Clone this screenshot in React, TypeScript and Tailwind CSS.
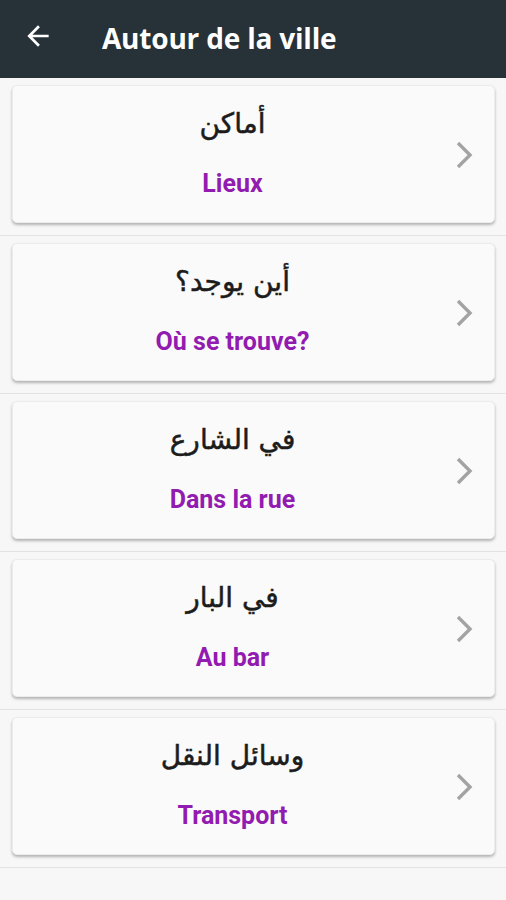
const items = [
  { ar: "أماكن", fr: "Lieux" },
  { ar: "أين يوجد؟", fr: "Où se trouve?" },
  { ar: "في الشارع", fr: "Dans la rue" },
  { ar: "في البار", fr: "Au bar" },
  { ar: "وسائل النقل", fr: "Transport" },
]

export default function App() {
  return (
    <div className="w-[506px] h-[900px] bg-[#f7f7f7] overflow-hidden">
      {/* Toolbar */}
      <div className="h-[78px] bg-[#263238] flex items-center">
        <svg width="32" height="32" viewBox="0 0 24 24" className="ml-[22px] mb-[7px]">
          <path d="M20 11H7.83l5.59-5.59L12 4l-8 8 8 8 1.41-1.41L7.83 13H20v-2z" fill="#fff" />
        </svg>
        <h1 className="ml-[48px] mb-[2px] text-white text-[28px] font-bold tracking-[-0.2px] font-['Open_Sans',sans-serif]">
          Autour de la ville
        </h1>
      </div>

      {items.map((item) => (
        <div key={item.fr} className="pt-[7px] pb-[12px] border-b border-[#e3e3e3]">
          <div className="mx-[12px] mr-[11px] h-[138px] bg-[#fafafa] rounded-[5px] shadow-[0_2px_3px_rgba(0,0,0,0.28)] border border-[#ececec] flex items-center">
            <div className="flex-1 flex flex-col items-center mb-[4px]">
              <div
                dir="rtl"
                className="text-[28px] leading-[40px] text-[#1c1c1c] [-webkit-text-stroke:0.5px_#1c1c1c] font-['DejaVu_Sans',sans-serif]"
              >
                {item.ar}
              </div>
              <div className="mt-[24px] text-[25px] leading-[32px] font-bold text-[#921bb0] font-['Roboto',sans-serif]">
                {item.fr}
              </div>
            </div>
            <svg width="24" height="32" viewBox="0 0 24 32" className="mr-[18px] mt-[2px]">
              <polyline points="6,4 18,16 6,28" fill="none" stroke="#a3a3a3" strokeWidth="3.4" />
            </svg>
          </div>
        </div>
      ))}
    </div>
  )
}
